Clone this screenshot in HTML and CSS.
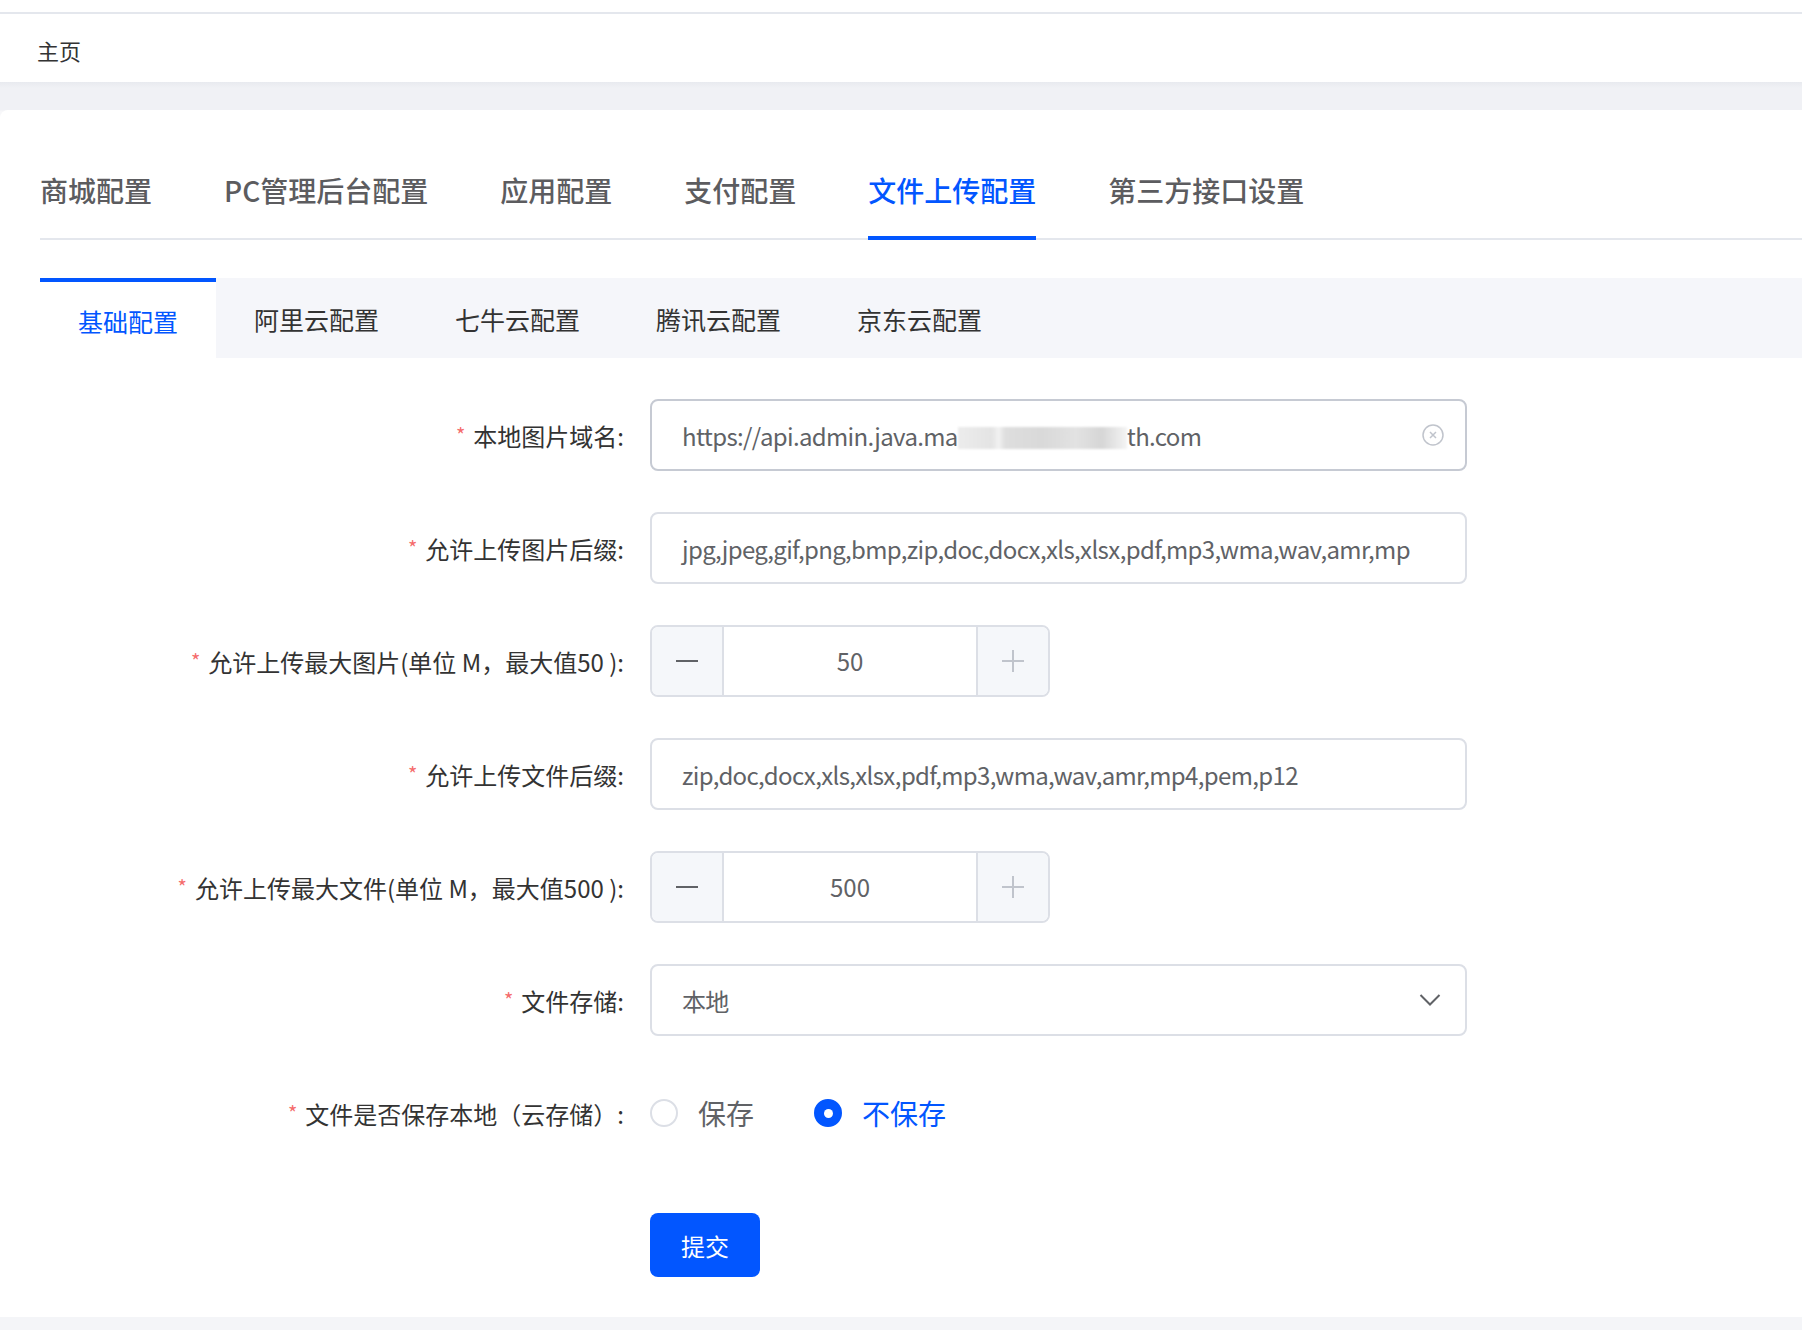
FILE: index.html
```html
<!DOCTYPE html>
<html lang="zh-CN">
<head>
    <meta charset="UTF-8">
    <title>文件上传配置</title>
    <link rel="stylesheet" href="styles.css">
</head>
<body>

    <div class="topbar"></div>
    <div class="crumb">主页</div>

    <div class="main">
        <div class="card">

            <!-- Top level tabs -->
            <div class="tabs">
                <div class="tab">商城配置</div>
                <div class="tab">PC管理后台配置</div>
                <div class="tab">应用配置</div>
                <div class="tab">支付配置</div>
                <div class="tab active">文件上传配置</div>
                <div class="tab">第三方接口设置</div>
            </div>

            <!-- Storage tabs -->
            <div class="subtabs">
                <div class="subtab active">基础配置</div>
                <div class="subtab">阿里云配置</div>
                <div class="subtab">七牛云配置</div>
                <div class="subtab">腾讯云配置</div>
                <div class="subtab">京东云配置</div>
            </div>

            <form class="form">
                <div class="form-row">
                    <label class="form-label required">本地图片域名:</label>
                    <div class="field field-hover">
                        <span class="field-text">https://api.admin.java.ma<span class="masked"></span>th.com</span>
                        <svg class="clear-icon" width="24" height="24" viewBox="0 0 24 24">
                            <circle cx="12" cy="12" r="10" fill="none" stroke="#c0c4cc" stroke-width="1.5"/>
                            <path d="M9 9 L15 15 M15 9 L9 15" stroke="#c0c4cc" stroke-width="1.5"/>
                        </svg>
                    </div>
                </div>

                <div class="form-row">
                    <label class="form-label required">允许上传图片后缀:</label>
                    <div class="field">
                        <span class="field-text">jpg,jpeg,gif,png,bmp,zip,doc,docx,xls,xlsx,pdf,mp3,wma,wav,amr,mp</span>
                    </div>
                </div>

                <div class="form-row">
                    <label class="form-label required">允许上传最大图片(单位 M，最大值50 ):</label>
                    <div class="stepper">
                        <span class="step-btn"><i class="minus"></i></span>
                        <span class="step-value">50</span>
                        <span class="step-btn disabled"><i class="plus"></i></span>
                    </div>
                </div>

                <div class="form-row">
                    <label class="form-label required">允许上传文件后缀:</label>
                    <div class="field">
                        <span class="field-text">zip,doc,docx,xls,xlsx,pdf,mp3,wma,wav,amr,mp4,pem,p12</span>
                    </div>
                </div>

                <div class="form-row">
                    <label class="form-label required">允许上传最大文件(单位 M，最大值500 ):</label>
                    <div class="stepper">
                        <span class="step-btn"><i class="minus"></i></span>
                        <span class="step-value">500</span>
                        <span class="step-btn disabled"><i class="plus"></i></span>
                    </div>
                </div>

                <div class="form-row">
                    <label class="form-label required">文件存储:</label>
                    <div class="field">
                        <span class="field-text">本地</span>
                        <svg class="arrow-icon" width="22" height="14" viewBox="0 0 22 14">
                            <path d="M1.5 2 L11 11.5 L20.5 2" fill="none" stroke="#606266" stroke-width="2"/>
                        </svg>
                    </div>
                </div>

                <div class="form-row">
                    <label class="form-label required">文件是否保存本地（云存储）:</label>
                    <div class="radio-group">
                        <span class="radio"><span class="radio-dot"></span>保存</span>
                        <span class="radio checked"><span class="radio-dot"></span>不保存</span>
                    </div>
                </div>

                <div class="form-actions">
                    <button type="button" class="submit-btn">提交</button>
                </div>
            </form>

        </div>
    </div>

</body>
</html>
```

FILE: styles.css
```css
/* Reset */
* {
    margin: 0;
    padding: 0;
    box-sizing: border-box;
}

body {
    font-family: "Noto Sans CJK SC", "Noto Sans", sans-serif;
    background: #f4f5f8;
    color: #333;
    width: 1802px;
    height: 1330px;
    overflow: hidden;
}

/* Header */
.topbar {
    height: 14px;
    background: #fff;
    border-bottom: 2px solid #e4e7ed;
}

.crumb {
    height: 68px;
    background: #fff;
    padding: 4px 0 0 37px;
    display: flex;
    align-items: center;
    font-size: 22px;
    color: #333;
}

.main {
    padding-top: 28px;
    background: linear-gradient(#e8eaef, #f0f1f5 6px, #f0f1f5 28px, #f7f7f9 29px);
}

/* Card */
.card {
    background: #fff;
    border-radius: 8px 0 0 0;
    padding: 50px 0 40px 40px;
}

/* Tabs */
.tabs {
    display: flex;
    height: 80px;
    border-bottom: 2px solid #e4e7ed;
}

.tab {
    position: relative;
    height: 78px;
    padding: 0 36px;
    font-size: 28px;
    font-weight: 500;
    line-height: 60px;
    color: #5c5c5f;
}

.tab:first-child {
    padding-left: 0;
}

.tab.active {
    color: #0256ff;
}

.tab.active::after {
    content: "";
    position: absolute;
    left: 36px;
    right: 36px;
    bottom: -2px;
    height: 4px;
    background: #0256ff;
}

/* Sub tabs */
.subtabs {
    display: flex;
    margin-top: 38px;
    height: 80px;
    background: #f5f6fa;
}

.subtab {
    padding: 0 38px;
    font-size: 25px;
    line-height: 82px;
    color: #333;
}

.subtab.active {
    background: #fff;
    color: #0256ff;
    border-top: 4px solid #0256ff;
    line-height: 78px;
}

/* Form */
.form {
    padding-top: 41px;
}

.form-row {
    display: flex;
    align-items: center;
    height: 72px;
    margin-bottom: 41px;
}

.form-label {
    width: 610px;
    padding-right: 26px;
    text-align: right;
    font-size: 24px;
    color: #333;
}

.form-label.required::before {
    content: "*";
    color: #f56c6c;
    margin-right: 8px;
    vertical-align: 3px;
    font-size: 20px;
}

.field {
    width: 817px;
    height: 72px;
    border: 2px solid #dcdfe6;
    border-radius: 8px;
    padding: 0 22px 0 30px;
    display: flex;
    align-items: center;
    justify-content: space-between;
}

.field-hover {
    border-color: #c6cad3;
}

.field-text {
    font-size: 24px;
    letter-spacing: -0.65px;
    color: #606266;
    white-space: nowrap;
}

.masked {
    display: inline-block;
    width: 169px;
    height: 22px;
    vertical-align: -3px;
    background: linear-gradient(90deg, #ececec 0, #e4e4e4 20%, #f2f2f2 24%, #dedede 28%, #d9d9d9 50%, #e2e2e2 70%, #d6d6d6 85%, #f4f4f4 100%);
    filter: blur(1px);
}

.clear-icon {
    margin-right: -2px;
}

.arrow-icon {
    margin-right: 2px;
}

/* Number stepper */
.stepper {
    display: flex;
    width: 400px;
    height: 72px;
    border: 2px solid #dcdfe6;
    border-radius: 8px;
    overflow: hidden;
}

.step-btn {
    width: 72px;
    background: #f5f7fa;
    display: flex;
    align-items: center;
    justify-content: center;
}

.step-btn:first-child {
    border-right: 2px solid #dcdfe6;
}

.step-btn:last-child {
    border-left: 2px solid #dcdfe6;
}

.step-value {
    flex: 1;
    text-align: center;
    font-size: 24px;
    line-height: 68px;
    color: #606266;
}

.minus,
.plus {
    position: relative;
    display: block;
    width: 22px;
    height: 2px;
    background: #606266;
}

.plus {
    background: #c0c4cc;
}

.plus::after {
    content: "";
    position: absolute;
    left: 10px;
    top: -10px;
    width: 2px;
    height: 22px;
    background: #c0c4cc;
}

/* Radios */
.radio-group {
    display: flex;
    align-items: center;
}

.radio {
    display: flex;
    align-items: center;
    margin-right: 60px;
    font-size: 28px;
    color: #606266;
}

.radio-dot {
    width: 28px;
    height: 28px;
    border: 2px solid #dcdfe6;
    border-radius: 50%;
    margin-right: 20px;
    display: flex;
    align-items: center;
    justify-content: center;
}

.radio.checked {
    color: #0256ff;
}

.radio.checked .radio-dot {
    background: #0256ff;
    border-color: #0256ff;
}

.radio.checked .radio-dot::after {
    content: "";
    width: 9px;
    height: 9px;
    border-radius: 50%;
    background: #fff;
}

/* Submit */
.form-actions {
    padding: 23px 0 0 610px;
}

.submit-btn {
    width: 110px;
    height: 64px;
    border: none;
    border-radius: 8px;
    background: #0256ff;
    color: #fff;
    font-family: inherit;
    font-size: 24px;
    cursor: pointer;
}
```
